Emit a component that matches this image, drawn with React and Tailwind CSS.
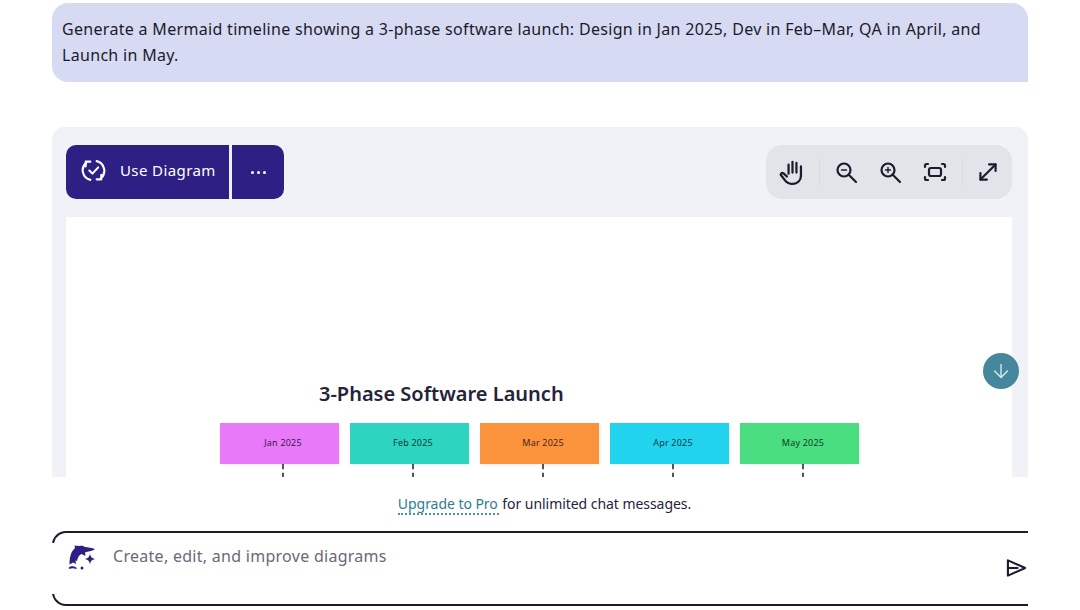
import { MoveDiagonal, ArrowDown } from "lucide-react";

const months = [
  { label: "Jan 2025", color: "bg-[#e879f9]", text: "text-[#3b1a4a]" },
  { label: "Feb 2025", color: "bg-[#2dd4bf]", text: "text-[#0f3b3a]" },
  { label: "Mar 2025", color: "bg-[#fb923c]", text: "text-[#43281a]" },
  { label: "Apr 2025", color: "bg-[#22d3ee]", text: "text-[#0e3a4c]" },
  { label: "May 2025", color: "bg-[#4ade80]", text: "text-[#0f3b2a]" },
];

function SyncCheck() {
  return (
    <svg width="25" height="25" viewBox="0 0 24 24" fill="none" stroke="currentColor" strokeWidth="2" strokeLinecap="round" strokeLinejoin="round">
      <path d="M4.500 8V3.500H9" />
      <path d="M5 4.500A9.500 9.500 0 0 0 9 21" />
      <path d="M19.500 16v4.500H15" />
      <path d="M19 19.500A9.500 9.500 0 0 0 15 3" />
      <path d="M8 12l3 3 5.500-6" />
    </svg>
  );
}

function HandIcon() {
  return (
    <svg width="27" height="27" viewBox="0 0 24 24" fill="none" stroke="currentColor" strokeWidth="2" strokeLinecap="round" strokeLinejoin="round">
      <path d="M8.500 13V5" />
      <path d="M12 12V2.500" />
      <path d="M15.500 12V3.500" />
      <path d="M19.500 6.500V15a7 7 0 0 1-7 7H11c-3 0-4.500-1.500-6-3.500L1.800 14.500c-.8-1.200.9-2.700 2.200-1.700L7 15.500" />
    </svg>
  );
}

function Magnifier({ plus }) {
  return (
    <svg width="21" height="21" viewBox="0 0 21 21" fill="none" stroke="currentColor" strokeWidth="2.200" strokeLinecap="round">
      <circle cx="8" cy="8" r="6.500" />
      <path d="M13 13l7 7" />
      <path d="M5.500 8h5" strokeWidth="1.400" />
      {plus && <path d="M8 5.500v5" strokeWidth="1.400" />}
    </svg>
  );
}

function FitIcon() {
  return (
    <svg width="24" height="20" viewBox="0 0 24 20" fill="none" stroke="currentColor" strokeWidth="2.200" strokeLinecap="round" strokeLinejoin="round">
      <path d="M2 5V3.500A1.500 1.500 0 0 1 3.500 2H5" />
      <path d="M19 2h1.500A1.500 1.500 0 0 1 22 3.500V5" />
      <path d="M22 15v1.500a1.500 1.500 0 0 1-1.500 1.500H19" />
      <path d="M5 18H3.500A1.500 1.500 0 0 1 2 16.500V15" />
      <rect x="6" y="6" width="12" height="8" rx="2" />
    </svg>
  );
}

function Dolphin() {
  return (
    <svg width="28" height="28" viewBox="0 0 28 28" fill="#2e1f85">
      <path d="M6.500 2.500L11 3C13.500 2.500 15.500 3 17 4C20 4 24 5 27 6C25 8 21 8.500 18.500 9L17 9.500L17.500 13L13.500 11C11 12 9.500 15 9 18L7.500 17.500L8 21L5 19.500L1.500 21.500C1.500 14 3 8.500 7 5Z" />
      <path d="M0.500 25C2 22.500 6 22.500 9 25L8 26C6 25 3 25 1.500 26Z" />
      <path d="M22 10.500C22.700 14 23.500 15 27 16C23.500 17 22.700 18 22 21.500C21.300 18 20.500 17 17 16C20.500 15 21.300 14 22 10.500Z" />
      <circle cx="14" cy="25" r="1.500" />
    </svg>
  );
}

export default function App() {
  return (
    <div className="h-[610px] w-[1080px] overflow-hidden bg-white flex flex-col text-[#1e1b2e] font-['Noto_Sans',sans-serif]">
      <div className="h-[477px] shrink-0 overflow-hidden pl-[52px] pr-[52px] pt-[3px] relative">
        <div className="h-[79px] bg-[#d6daf3] rounded-l-2xl rounded-tr-2xl pl-[10px] pt-[13px] text-[16px] leading-[26px] tracking-[0.31px] text-[#1c1b2b]">
          Generate a Mermaid timeline showing a 3-phase software launch: Design in Jan 2025, Dev in Feb–Mar, QA in April, and
          <br />
          Launch in May.
        </div>

        <div className="mt-[45px] bg-[#f1f2f7] rounded-t-xl px-[14px] pt-[18px] pb-px">
          <div className="flex justify-between pr-[2px]">
            <div className="flex h-[54px] text-white">
              <button type="button" className="w-[163px] bg-[#2e1f85] rounded-l-[10px] flex items-center gap-[14px] pl-[15px] pb-[3px] text-[15px] tracking-[0.4px]">
                <SyncCheck />
                Use Diagram
              </button>
              <button type="button" className="ml-[3px] w-[52px] bg-[#2e1f85] rounded-r-[10px] flex items-center justify-center gap-[3px]">
                <span className="w-[3px] h-[3px] rounded-full bg-white" />
                <span className="w-[3px] h-[3px] rounded-full bg-white" />
                <span className="w-[3px] h-[3px] rounded-full bg-white" />
              </button>
            </div>
            <div className="flex items-center h-[54px] w-[246px] bg-[#e3e4ea] rounded-2xl pl-[13px] text-[#1e1b2e]">
              <HandIcon />
              <span className="ml-[13px] w-px h-[26px] bg-[#d3dde2]" />
              <span className="ml-[16px]"><Magnifier /></span>
              <span className="ml-[23px]"><Magnifier plus /></span>
              <span className="ml-[22px]"><FitIcon /></span>
              <span className="ml-[15px] w-px h-[26px] bg-[#d3dde2]" />
              <MoveDiagonal size={26} strokeWidth={2} className="ml-[12px]" />
            </div>
          </div>

          <div className="mt-[18px] mr-[2px] h-[300px] bg-white pl-[154px] pt-[165px]">
            <h2 className="pl-[99px] text-[20px] leading-[24px] font-semibold text-[#25233a]">3-Phase Software Launch</h2>
            <div className="mt-[17px] flex gap-[11px]">
              {months.map((m) => (
                <div key={m.label} className="w-[119px] flex flex-col">
                  <div className={`h-[41px] flex items-center justify-center pl-[7px] pb-[2px] text-[9px] tracking-[0.2px] shadow-[1px_1px_3px_rgba(0,0,0,0.08)] ${m.color} ${m.text}`}>
                    {m.label}
                  </div>
                  <div className="ml-[62px] h-[14px] w-0 border-l-2 border-dashed border-[#55535f]" />
                </div>
              ))}
            </div>
          </div>
        </div>

        <button type="button" className="absolute left-[983px] top-[353px] w-[36px] h-[36px] rounded-full bg-[#45879c] flex items-center justify-center text-[#d4ecf2]">
          <ArrowDown size={22} strokeWidth={1.5} />
        </button>
      </div>

      <div className="flex-1 pl-[52px] pr-[52px]">
        <p className="pt-[17px] pl-[9px] h-[54px] text-center text-[14px] leading-[20px] tracking-[-0.05px] text-[#26243a]">
          <span className="text-[#2f7d8f] border-b-2 border-dotted border-[#4b93a5] pr-px">Upgrade to Pro</span> for unlimited chat messages.
        </p>
        <div className="relative h-[75px] border-y-2 border-l-2 border-[#1e1b2e] rounded-l-[14px] flex items-start pl-[14px] pt-[10px]">
          <span className="absolute left-[-2px] top-[10px] bottom-[10px] w-[2px] bg-white" />
          <Dolphin />
          <span className="ml-[17px] mt-[1px] text-[16px] leading-[24px] tracking-[0.28px] text-[#6a6975]">Create, edit, and improve diagrams</span>
          <svg width="21" height="20" viewBox="0 0 22 20" fill="none" stroke="#1e1b2e" strokeWidth="2.200" strokeLinejoin="round" className="absolute right-[1px] top-[25px]">
            <path d="M2 2l18 8-18 8z" />
            <path d="M2 10h11" />
          </svg>
        </div>
      </div>
    </div>
  );
}
